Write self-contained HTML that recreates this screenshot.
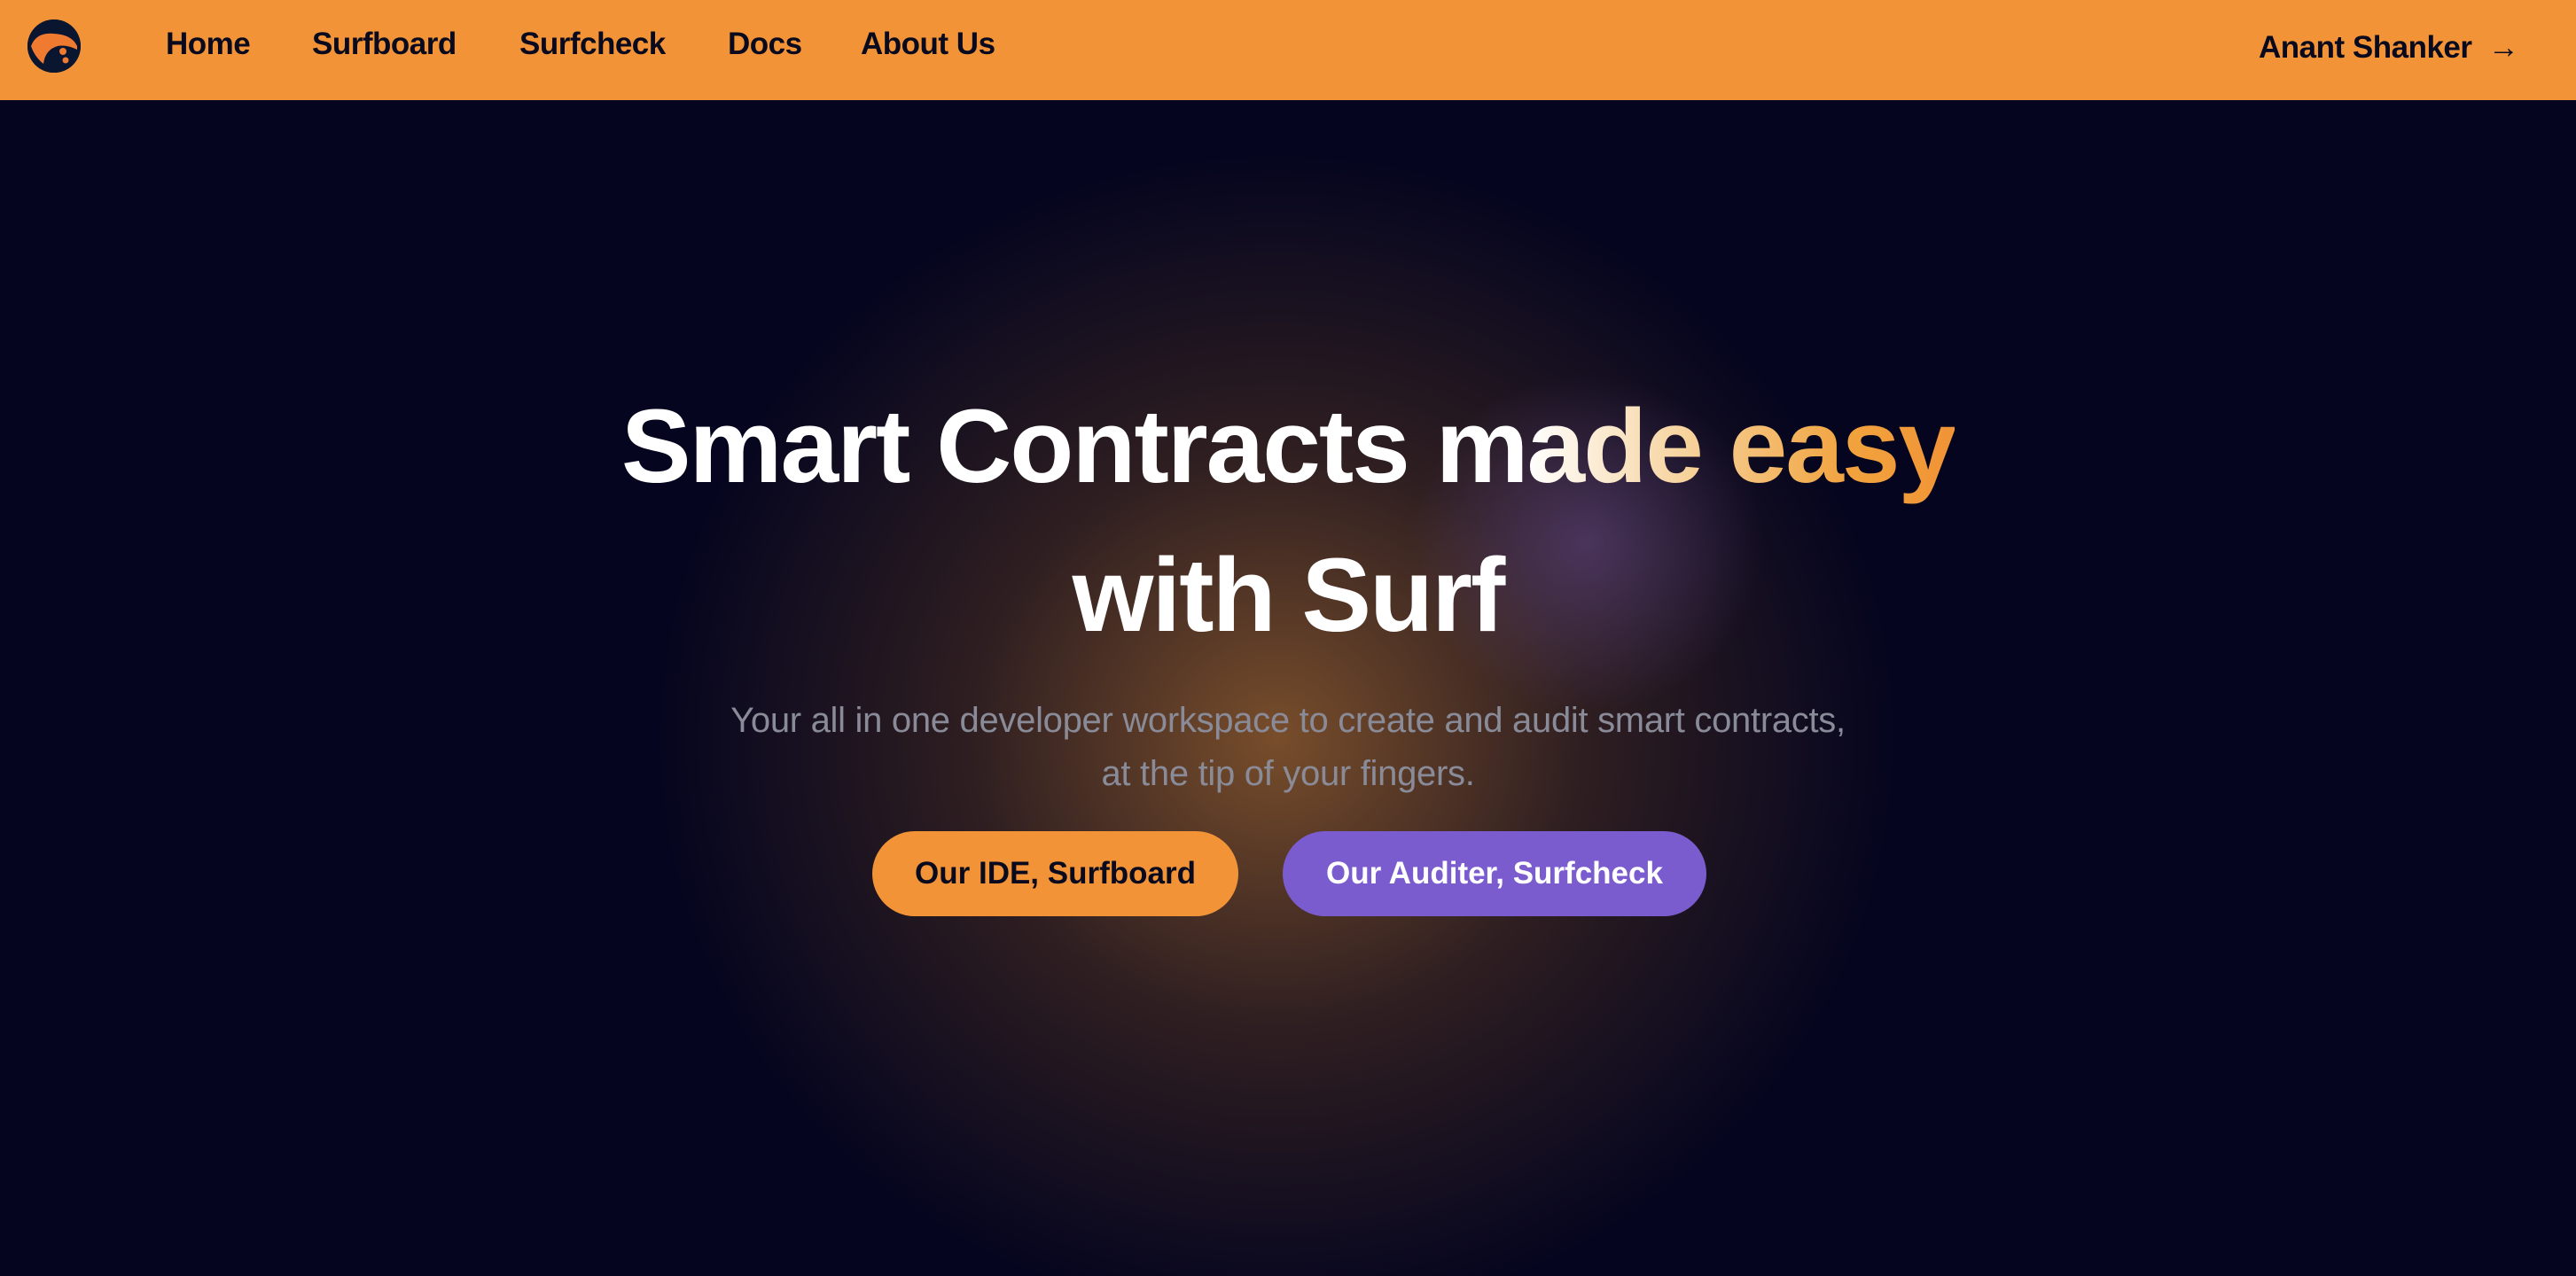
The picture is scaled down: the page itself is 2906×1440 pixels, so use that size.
<!DOCTYPE html>
<html><head><meta charset="utf-8"><style>
*{margin:0;padding:0;box-sizing:border-box}
html,body{width:2906px;height:1440px;overflow:hidden;background:#05051f;font-family:"Liberation Sans",sans-serif}
.nav{position:absolute;left:0;top:0;width:2906px;height:113px;background:#f19336}
.nav a{position:absolute;top:30px;font-size:35px;font-weight:700;color:#0a0a1e;text-decoration:none;letter-spacing:-0.5px}
.logo{position:absolute;left:31px;top:22px;width:60px;height:60px;border-radius:50%;background:#0a1530;overflow:hidden}
.bg{position:absolute;left:0;top:113px;width:2906px;height:1327px;
background:
radial-gradient(ellipse 200px 190px at 1790px 500px,rgba(110,80,150,0.5),rgba(110,80,150,0) 100%),
radial-gradient(ellipse 700px 660px at 1440px 720px,rgba(140,90,45,0.85),rgba(95,60,35,0.45) 50%,rgba(5,5,31,0) 100%),
#05051f}
h1{position:absolute;left:0;width:2906px;text-align:center;color:#fff;font-weight:700;font-size:118px;letter-spacing:-2px}
.g{background:linear-gradient(90deg,#fff 0%,#f6cf95 40%,#f1a33e 75%,#f19336 100%);-webkit-background-clip:text;background-clip:text;color:transparent}
.sub{position:absolute;left:0;width:2906px;text-align:center;color:#8a8b98;font-size:40px;line-height:60px;letter-spacing:-0.3px}
.btn{position:absolute;top:938px;height:96px;border-radius:48px;font-size:35px;font-weight:700;text-align:center;line-height:96px}
</style></head><body>
<div class="nav">
 <div class="logo">
  <svg width="60" height="60" viewBox="0 0 60 60">
   <rect x="0" y="0" width="60" height="60" fill="#0a1530"/>
   <path d="M4 30 Q10 14 30 16 Q50 17 56 30 L56 34 Q44 28 34 30 Q20 34 18 50 Q8 42 4 30Z" fill="#f07a30"/>
   <circle cx="40" cy="36" r="4" fill="#f07a30"/><circle cx="43" cy="46" r="3.5" fill="#f07a30"/>
  </svg>
 </div>
 <a style="left:187px">Home</a>
 <a style="left:352px">Surfboard</a>
 <a style="left:586px">Surfcheck</a>
 <a style="left:821px">Docs</a>
 <a style="left:971px">About Us</a>
 <a style="left:2548px;top:34px">Anant Shanker &nbsp;→</a>
</div>
<div class="bg"></div>
<h1 style="top:436px">Smart Contracts m<span class="g">ade easy</span></h1>
<h1 style="top:604px">with Surf</h1>
<div class="sub" style="top:783px">Your all in one developer workspace to create and audit smart contracts,<br>at the tip of your fingers.</div>
<div class="btn" style="left:984px;width:413px;background:#f19336;color:#0a0a1e">Our IDE, Surfboard</div>
<div class="btn" style="left:1447px;width:478px;background:#7b5ccf;color:#fff">Our Auditer, Surfcheck</div>
</body></html>
